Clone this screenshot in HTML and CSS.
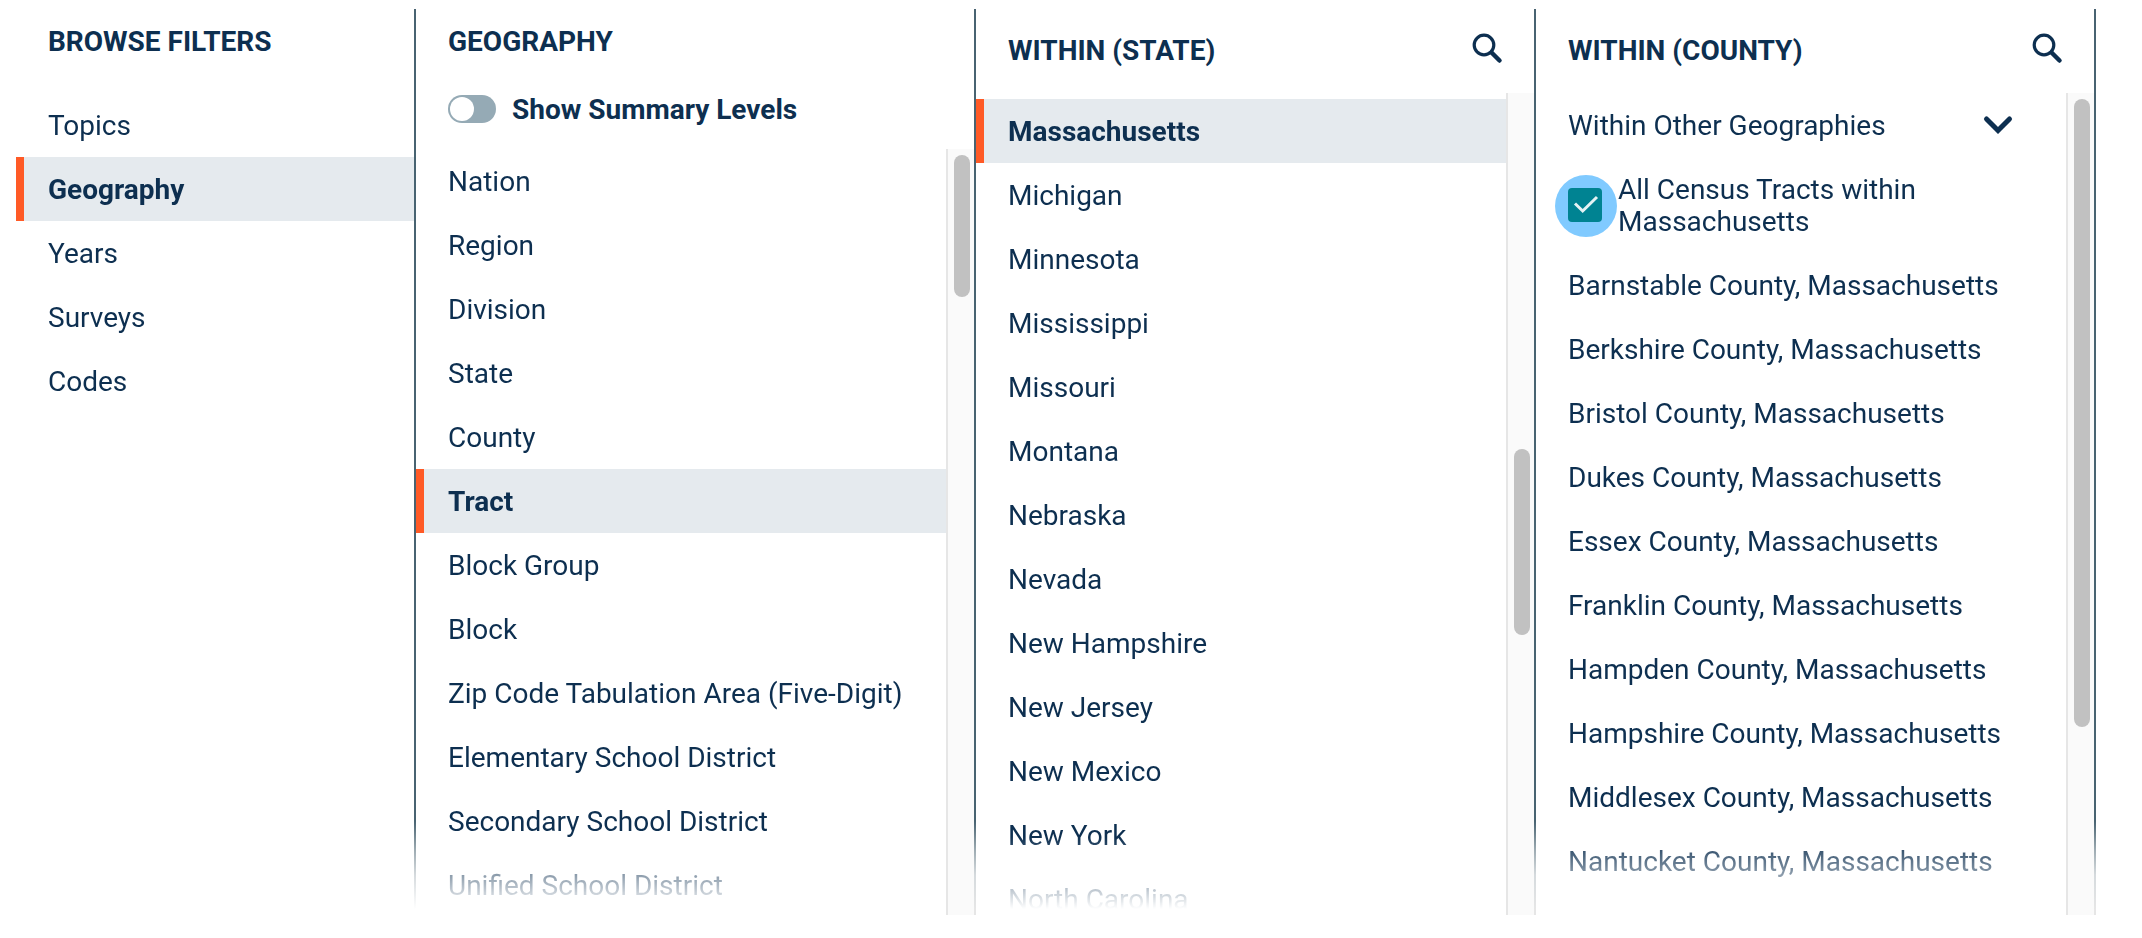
FILE: index.html
```html
<!DOCTYPE html>
<html lang="en">
<head>
<meta charset="utf-8">
<title>Browse Filters</title>
<link rel="stylesheet" href="styles.css">
</head>
<body>
<main class="browser">
  <nav class="panel panel-filters">
    <h2 class="title">BROWSE FILTERS</h2>
    <ul class="list">
      <li class="item">Topics</li>
      <li class="item selected">Geography</li>
      <li class="item">Years</li>
      <li class="item">Surveys</li>
      <li class="item">Codes</li>
    </ul>
  </nav>

  <section class="panel panel-geography">
    <h2 class="title">GEOGRAPHY</h2>
    <div class="toggle-row"><span class="switch"><span class="knob"></span></span><span class="toggle-label">Show Summary Levels</span></div>
    <div class="scroller">
      <ul class="list">
        <li class="item">Nation</li>
        <li class="item">Region</li>
        <li class="item">Division</li>
        <li class="item">State</li>
        <li class="item">County</li>
        <li class="item selected">Tract</li>
        <li class="item">Block Group</li>
        <li class="item">Block</li>
        <li class="item">Zip Code Tabulation Area (Five-Digit)</li>
        <li class="item">Elementary School District</li>
        <li class="item">Secondary School District</li>
        <li class="item">Unified School District</li>
      </ul>
      <div class="track"><div class="thumb thumb-geography"></div></div>
    </div>
  </section>

  <section class="panel panel-state">
    <header class="head">
      <h2 class="title">WITHIN (STATE)</h2>
      <svg class="search" viewBox="0 0 34 34"><circle cx="13" cy="13" r="9.800"/><path d="M20.500 20.500L28.500 28.500"/></svg>
    </header>
    <div class="scroller">
      <ul class="list">
        <li class="item selected">Massachusetts</li>
        <li class="item">Michigan</li>
        <li class="item">Minnesota</li>
        <li class="item">Mississippi</li>
        <li class="item">Missouri</li>
        <li class="item">Montana</li>
        <li class="item">Nebraska</li>
        <li class="item">Nevada</li>
        <li class="item">New Hampshire</li>
        <li class="item">New Jersey</li>
        <li class="item">New Mexico</li>
        <li class="item">New York</li>
        <li class="item">North Carolina</li>
      </ul>
      <div class="track"><div class="thumb thumb-state"></div></div>
    </div>
  </section>

  <section class="panel panel-county">
    <header class="head">
      <h2 class="title">WITHIN (COUNTY)</h2>
      <svg class="search" viewBox="0 0 34 34"><circle cx="13" cy="13" r="9.800"/><path d="M20.500 20.500L28.500 28.500"/></svg>
    </header>
    <div class="scroller">
      <ul class="list">
        <li class="item expandable">Within Other Geographies
          <svg class="chevron" viewBox="0 0 32 24"><path d="M4.500 6L16 17.500L27.500 6"/></svg>
        </li>
        <li class="item check-item">
          <span class="halo"><svg class="checkbox" viewBox="0 0 34 34"><path d="M7 15.500L14.700 23L29 9"/></svg></span>
          <span class="check-label">All Census Tracts within Massachusetts</span>
        </li>
        <li class="item">Barnstable County, Massachusetts</li>
        <li class="item">Berkshire County, Massachusetts</li>
        <li class="item">Bristol County, Massachusetts</li>
        <li class="item">Dukes County, Massachusetts</li>
        <li class="item">Essex County, Massachusetts</li>
        <li class="item">Franklin County, Massachusetts</li>
        <li class="item">Hampden County, Massachusetts</li>
        <li class="item">Hampshire County, Massachusetts</li>
        <li class="item">Middlesex County, Massachusetts</li>
        <li class="item">Nantucket County, Massachusetts</li>
      </ul>
      <div class="track"><div class="thumb thumb-county"></div></div>
    </div>
  </section>
</main>
</body>
</html>
```
FILE: styles.css
```css
* { box-sizing: border-box; }

body {
  margin: 0;
  background: #fff;
  color: #0d2f50;
  font: 400 28px/32px Roboto, sans-serif;
}

.browser {
  display: grid;
  grid-template-columns: 400px repeat(3, 560px);
  grid-template-rows: 906px;
  height: 915px;
  padding: 9px 0 0 16px;
  overflow: hidden;
}

.panel {
  --line-end: #e6e6e6;
  display: flex;
  flex-direction: column;
  min-height: 0;
  border-right: 2px solid #486371;
  border-image: linear-gradient(#486371 812px, #9dabb2 841px, #d5dadd 866px, var(--line-end) 900px) 0 2 0 0;
}

.panel-filters { --line-end: #fff; }

.title {
  margin: 0;
  font-size: 28px;
  line-height: 32px;
  font-weight: 700;
}

.panel > .title { padding: 17px 32px 35px; }

.toggle-row {
  display: flex;
  align-items: center;
  gap: 16px;
  height: 32px;
  margin: 0 32px 24px;
  font-weight: 700;
}

.toggle-label { padding-top: 2px; }

.switch {
  width: 48px;
  height: 28px;
  padding: 2px;
  border-radius: 14px;
  background: #95aab5;
}

.knob {
  display: block;
  width: 24px;
  height: 24px;
  border-radius: 50%;
  background: #fff;
}

.head {
  display: flex;
  justify-content: space-between;
  align-items: center;
  height: 84px;
  padding: 0 29px 0 32px;
}

.scroller {
  display: flex;
  flex: 1;
  min-height: 0;
}

.list {
  flex: 1;
  margin: 0;
  padding: 0;
  overflow: hidden;
  list-style: none;
  mask-image: linear-gradient(to top, transparent 6px, #000 78px);
}

.panel-state .list { padding-top: 6px; }

.item {
  height: 64px;
  padding: 17px 0 15px 32px;
  white-space: nowrap;
}

.selected {
  padding-left: 24px;
  border-left: 8px solid #ff5a26;
  background: #e5eaee;
  font-weight: 700;
}

.track {
  width: 28px;
  padding: 6px 0 0 6px;
  border-left: 2px solid #e6e6e6;
  background: #fafafa;
}

.thumb {
  width: 16px;
  border-radius: 8px;
  background: #c1c1c1;
}

.thumb-geography { height: 142px; }
.thumb-state { height: 186px; margin-top: 350px; }
.thumb-county { height: 628px; }

.search {
  width: 34px;
  height: 34px;
  margin-top: -4px;
  fill: none;
  stroke: #0d2f50;
  stroke-width: 3.2;
  stroke-linecap: round;
}

.search path { stroke-width: 4.5; }

.expandable {
  display: flex;
  justify-content: space-between;
  align-items: center;
  padding-right: 52px;
}

.chevron {
  width: 32px;
  height: 24px;
  margin-bottom: 2px;
  fill: none;
  stroke: #0d2f50;
  stroke-width: 5;
  stroke-linecap: round;
}

.check-item {
  display: flex;
  align-items: center;
  height: 96px;
  padding: 2px 0 0 19px;
}

.halo {
  display: flex;
  flex: none;
  align-items: center;
  justify-content: center;
  width: 62px;
  height: 62px;
  margin-right: 1px;
  padding: 0 2px 2px 0;
  border-radius: 50%;
  background: #80caff;
}

.checkbox {
  width: 34px;
  height: 34px;
  border-radius: 4px;
  background: #008392;
  fill: none;
  stroke: #e5f3f4;
  stroke-width: 3;
}

.check-label {
  width: 330px;
  white-space: normal;
}
```
